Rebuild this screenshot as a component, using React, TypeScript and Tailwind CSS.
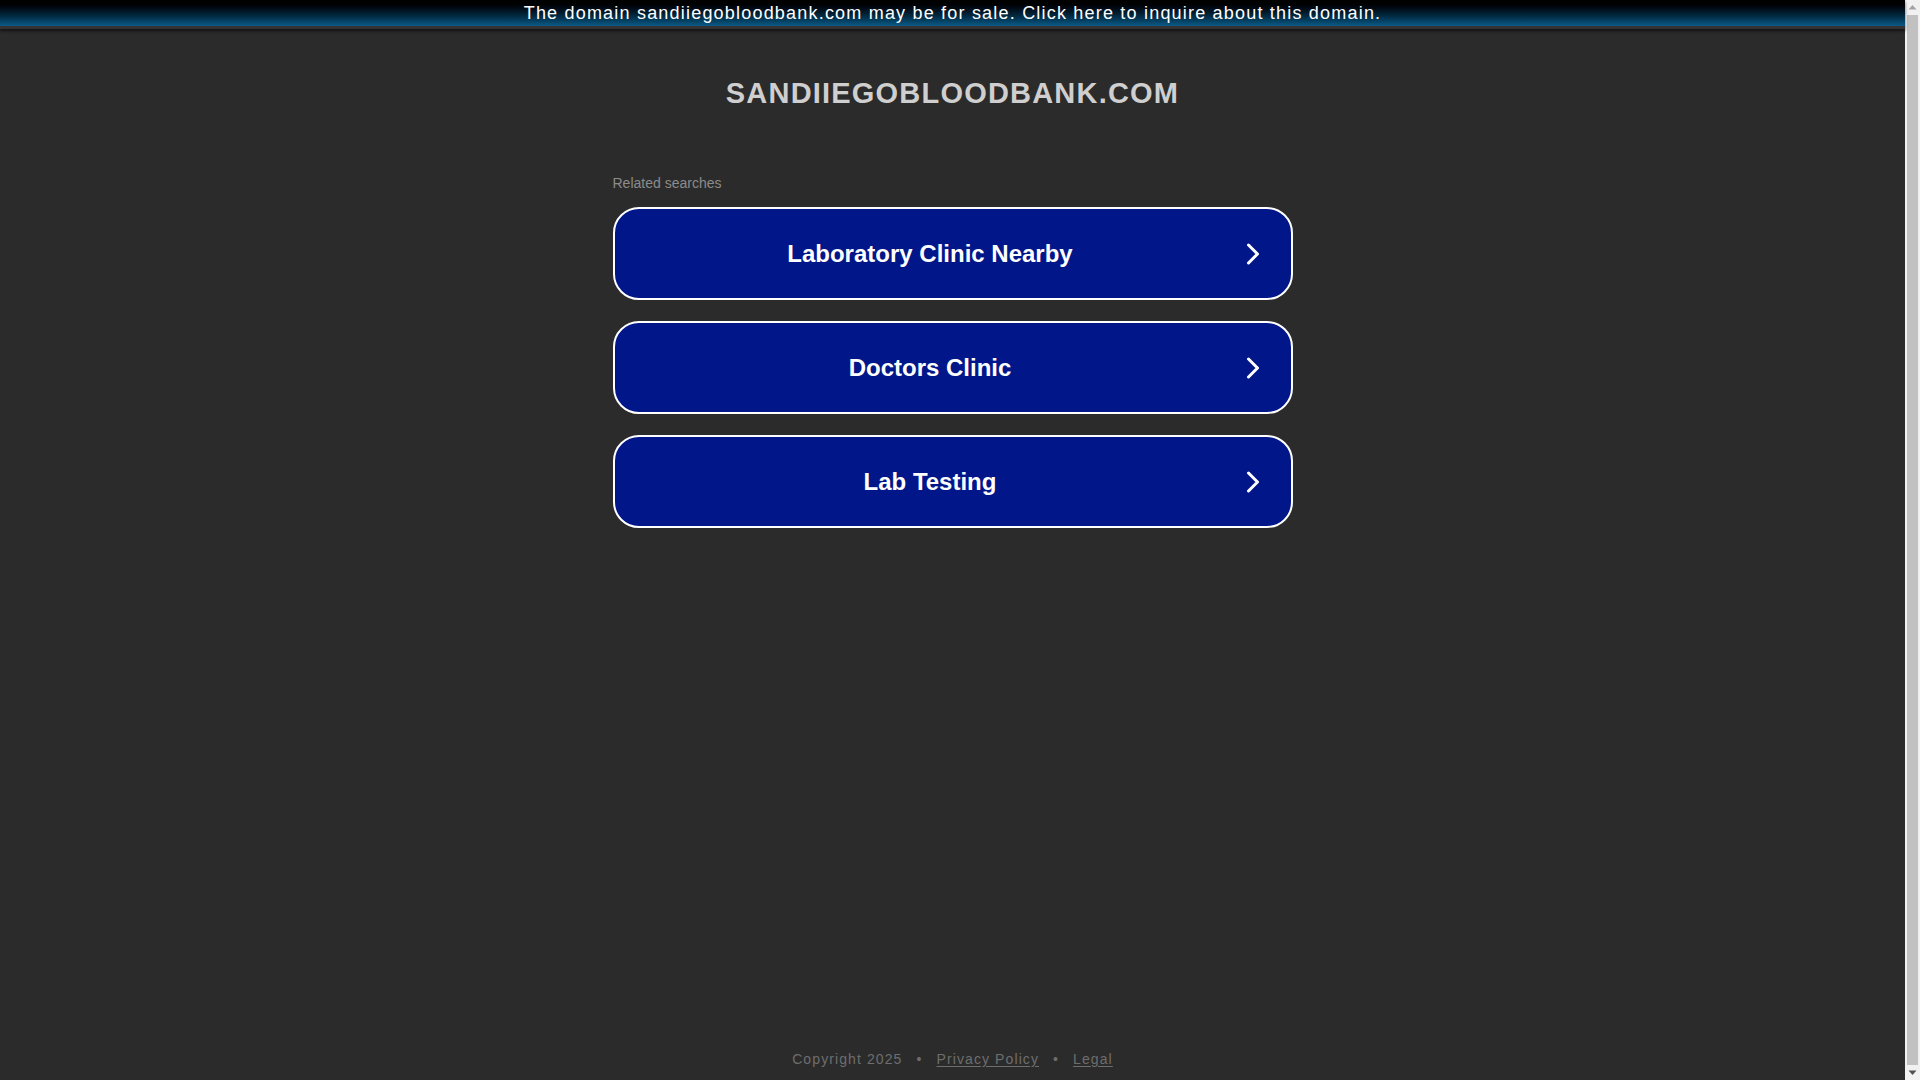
import React from 'react'

const searches = ['Laboratory Clinic Nearby', 'Doctors Clinic', 'Lab Testing']

const Chevron: React.FC = () => (
  <svg width="14" height="22" viewBox="0 0 14 22" fill="none" className="shrink-0">
    <path d="M2.5 2 L11.5 11 L2.5 20" stroke="white" strokeWidth="3" strokeLinecap="round" strokeLinejoin="round" />
  </svg>
)

// fake classic scrollbar, as seen in the screenshot
const Scrollbar: React.FC = () => (
  <div className="flex flex-col items-center w-[15px] h-full bg-[#f1f1f1]">
    <svg width="15" height="15" viewBox="0 0 15 15">
      <path d="M3.5 9.5 L7.5 5 L11.5 9.5 Z" fill="#a3a3a3" />
    </svg>
    <div className="flex-1 w-[11px] bg-[#c1c1c1]" />
    <svg width="15" height="15" viewBox="0 0 15 15">
      <path d="M3.5 5.5 L11.5 5.5 L7.5 10 Z" fill="#505050" />
    </svg>
  </div>
)

const App: React.FC = () => {
  return (
    <div className="flex h-screen overflow-hidden" style={{ fontFamily: '"Liberation Sans", Arial, sans-serif' }}>
      <div className="flex flex-1 flex-col bg-[#2b2b2b] text-white">
        <a
          href="#"
          className="relative z-10 flex items-center justify-center h-[29px] bg-gradient-to-b from-[#000000] to-[#0b5a87] text-[18px] tracking-[1.2px] text-white shadow-[0_2px_3px_rgba(0,0,0,0.6)] border-b-[3px] border-[#333333]"
        >
          The domain sandiiegobloodbank.com may be for sale. Click here to inquire about this domain.
        </a>

        <div className="flex flex-col items-center">
          <h1 className="mt-[47px] text-[29px] font-bold leading-[34px] tracking-[1.2px] text-[#cfcfcf]">
            SANDIIEGOBLOODBANK.COM
          </h1>

          <div className="mt-[65px] w-[680px]">
            <p className="text-[14px] leading-[17px] text-[#8c8c8c]">Related searches</p>
            <div className="mt-[15px] flex flex-col gap-[21px]">
              {searches.map((s) => (
                <a
                  key={s}
                  href="#"
                  className="flex items-center h-[93px] rounded-[26px] border-2 border-white bg-[#011689] pr-[31px]"
                >
                  <span className="flex-1 text-center text-[24px] font-bold">{s}</span>
                  <Chevron />
                </a>
              ))}
            </div>
          </div>
        </div>

        <div className="mt-auto mb-[10px] flex justify-center items-center gap-[14px] text-[14px] tracking-[1.1px] text-[#6e6e6e]">
          <span>Copyright 2025</span>
          <span>•</span>
          <a href="#" className="underline underline-offset-2">Privacy Policy</a>
          <span>•</span>
          <a href="#" className="underline underline-offset-2">Legal</a>
        </div>
      </div>
      <Scrollbar />
    </div>
  )
}

export default App
